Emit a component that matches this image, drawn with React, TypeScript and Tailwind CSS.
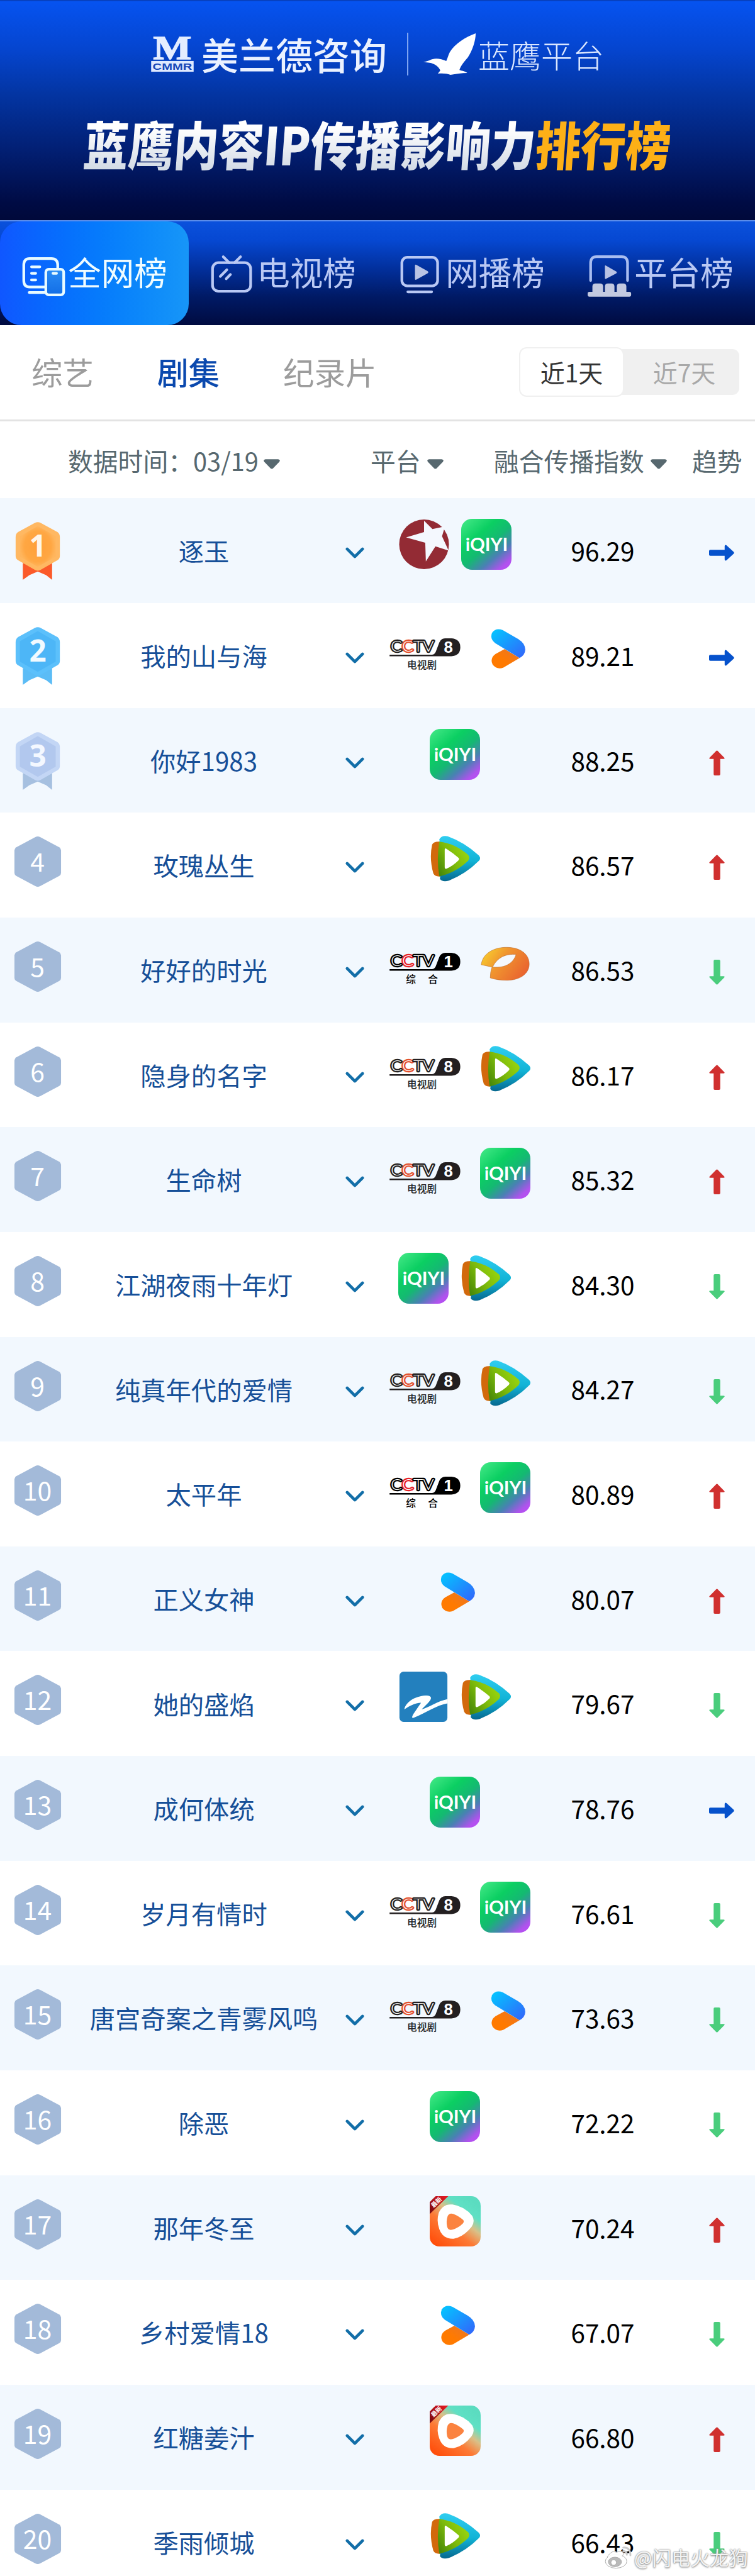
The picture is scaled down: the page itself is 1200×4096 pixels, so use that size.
import React from "react";

const FONT = "font-['Noto_Sans_CJK_SC','Noto_Sans',sans-serif]";

type Platform = "dragon" | "iqiyi" | "cctv8" | "cctv1" | "youku" | "tencent" | "jiangsu" | "zhejiang" | "hongguo";
type Trend = "flat" | "up" | "down";

type Item = {
  title: string;
  platforms: Platform[];
  score: string;
  trend: Trend;
};

const items: Item[] = [
  { title: "逐玉", platforms: ["dragon", "iqiyi"], score: "96.29", trend: "flat" },
  { title: "我的山与海", platforms: ["cctv8", "youku"], score: "89.21", trend: "flat" },
  { title: "你好1983", platforms: ["iqiyi"], score: "88.25", trend: "up" },
  { title: "玫瑰丛生", platforms: ["tencent"], score: "86.57", trend: "up" },
  { title: "好好的时光", platforms: ["cctv1", "jiangsu"], score: "86.53", trend: "down" },
  { title: "隐身的名字", platforms: ["cctv8", "tencent"], score: "86.17", trend: "up" },
  { title: "生命树", platforms: ["cctv8", "iqiyi"], score: "85.32", trend: "up" },
  { title: "江湖夜雨十年灯", platforms: ["iqiyi", "tencent"], score: "84.30", trend: "down" },
  { title: "纯真年代的爱情", platforms: ["cctv8", "tencent"], score: "84.27", trend: "down" },
  { title: "太平年", platforms: ["cctv1", "iqiyi"], score: "80.89", trend: "up" },
  { title: "正义女神", platforms: ["youku"], score: "80.07", trend: "up" },
  { title: "她的盛焰", platforms: ["zhejiang", "tencent"], score: "79.67", trend: "down" },
  { title: "成何体统", platforms: ["iqiyi"], score: "78.76", trend: "flat" },
  { title: "岁月有情时", platforms: ["cctv8", "iqiyi"], score: "76.61", trend: "down" },
  { title: "唐宫奇案之青雾风鸣", platforms: ["cctv8", "youku"], score: "73.63", trend: "down" },
  { title: "除恶", platforms: ["iqiyi"], score: "72.22", trend: "down" },
  { title: "那年冬至", platforms: ["hongguo"], score: "70.24", trend: "up" },
  { title: "乡村爱情18", platforms: ["youku"], score: "67.07", trend: "down" },
  { title: "红糖姜汁", platforms: ["hongguo"], score: "66.80", trend: "up" },
  { title: "季雨倾城", platforms: ["tencent"], score: "66.43", trend: "down" },
];

const Defs = () => (
  <svg className="absolute h-0 w-0" aria-hidden="true">
    <defs>
      <linearGradient id="iqiyi" x1="0.1" y1="0" x2="0.95" y2="1">
        <stop offset="0" stopColor="#3ee683" />
        <stop offset="0.3" stopColor="#0bcf62" />
        <stop offset="0.52" stopColor="#14b972" />
        <stop offset="0.72" stopColor="#4a80b4" />
        <stop offset="0.9" stopColor="#b152ee" />
        <stop offset="1" stopColor="#b94df5" />
      </linearGradient>
      <linearGradient id="youku" x1="0" y1="0" x2="1" y2="1">
        <stop offset="0.1" stopColor="#06bfff" />
        <stop offset="0.9" stopColor="#2f6cfb" />
      </linearGradient>
      <linearGradient id="youkuOrange" x1="0" y1="1" x2="1" y2="0">
        <stop offset="0.4" stopColor="#ff7a00" />
        <stop offset="1" stopColor="#e8762c" />
      </linearGradient>
      <linearGradient id="txBlue" x1="0" y1="0" x2="0" y2="1">
        <stop offset="0" stopColor="#2fcdf0" />
        <stop offset="0.55" stopColor="#11b3d6" />
        <stop offset="1" stopColor="#06688f" />
      </linearGradient>
      <linearGradient id="txGreen" x1="0.9" y1="0.2" x2="0" y2="0.8">
        <stop offset="0" stopColor="#9ad50e" />
        <stop offset="0.5" stopColor="#7dba0b" />
        <stop offset="1" stopColor="#4a8a08" />
      </linearGradient>
      <linearGradient id="jiangsu" x1="0" y1="0.2" x2="1" y2="0.7">
        <stop offset="0" stopColor="#f8cf2e" />
        <stop offset="0.4" stopColor="#f0962f" />
        <stop offset="1" stopColor="#e9612f" />
      </linearGradient>
      <linearGradient id="hongguo" x1="0.15" y1="1" x2="0.85" y2="0.1">
        <stop offset="0" stopColor="#ff4d0a" />
        <stop offset="0.4" stopColor="#fd7a35" />
        <stop offset="0.62" stopColor="#d9c088" />
        <stop offset="0.8" stopColor="#5fe0c4" />
        <stop offset="1" stopColor="#5bdcc0" />
      </linearGradient>
      <linearGradient id="ribbon" x1="0" y1="1" x2="1" y2="0">
        <stop offset="0.1" stopColor="#7d0a10" />
        <stop offset="0.9" stopColor="#e01a22" />
      </linearGradient>
      <radialGradient id="medal1">
        <stop offset="0" stopColor="#ffa03a" />
        <stop offset="0.75" stopColor="#ffa743" />
        <stop offset="1" stopColor="#ffb55c" />
      </radialGradient>
      <linearGradient id="phone" x1="0" y1="0" x2="0" y2="1">
        <stop offset="0" stopColor="#2a8cf5" />
        <stop offset="1" stopColor="#126ee6" />
      </linearGradient>
    </defs>
  </svg>
);

const Dragon = () => (
  <svg className="h-[81px] w-[80px]" viewBox="0 0 84 85">
    <circle cx="42" cy="42.5" r="41.5" fill="#932b34" />
    <path d="M42 3 L56 17 L71 14 L77 12 L72 29 L83 53 L61 46 L45 71 L44 40 L12 31 L42 22 Z" fill="#f4f8fe" />
  </svg>
);

const Iqiyi = () => (
  <svg className="h-[81px] w-[80px]" viewBox="0 0 84 85">
    <rect x="0" y="0" width="84" height="85" rx="18" fill="url(#iqiyi)" />
    <text x="7" y="54" fontSize="30" fontWeight="700" fill="#fff" textLength="71" lengthAdjust="spacingAndGlyphs" fontFamily="Lato, sans-serif">
      iQIYI
    </text>
  </svg>
);

const Cctv = ({ channel, label, dark, red }: { channel: string; label: string; dark: string; red: string }) => (
  <svg className="h-[81px] w-[141px]" viewBox="0 0 148 85">
    {/* inline letters: heavy stroke below, thin light fill on top */}
    <text
      x="19"
      y="46"
      fontFamily="Lato, sans-serif"
      fontWeight="300"
      fontSize="25"
      textLength="72"
      lengthAdjust="spacingAndGlyphs"
      fill="#fff"
      stroke={dark}
      strokeWidth="4.6"
      strokeLinejoin="round"
      paintOrder="stroke"
    >
      C<tspan stroke={red}>C</tspan>TV
    </text>
    <path d="M17 51.5 H88 Q93 51 95 44 L100 31 Q103 24 110 24 H120 Q135 25 135 39 Q135 53 120 54 H17 Z" fill={dark} />
    <text x="115" y="48" fontSize="27" fontWeight="700" fill="#fff" textAnchor="middle" fontFamily="Liberation Sans, sans-serif">
      {channel}
    </text>
    <text x="71" y="74" fontSize="16.5" fontWeight="500" fill={dark} textAnchor="middle" className="whitespace-pre" fontFamily="Noto Sans CJK SC, sans-serif">
      {label}
    </text>
  </svg>
);

const Youku = () => (
  <svg className="h-[81px] w-[81px]" viewBox="0 0 85 85">
    <path d="M41 42 L66 57 L39 73 Q28 77 21 68 Q16 57 26 50 Z" fill="url(#youkuOrange)" />
    <path d="M25 32 Q16 25 20 15 Q26 6 38 10.500 L63 25 Q75 32 75.500 43 Q75 52 66 57 Z" fill="url(#youku)" />
  </svg>
);

const Tencent = () => (
  <svg className="h-[81px] w-[81px]" viewBox="0 0 85 85">
    <path d="M15 14 Q20 13 24 14 L34 20 V66 L18 72 Q9 73 6 67 Q-1 42 4 19 Q6 14 15 14 Z" fill="#d2690c" />
    <path d="M16 10 Q20 3 30 5 Q58 15 82 37 Q86 42 82 46 Q60 68 32 79 Q21 82 17 76 Q22 42 16 10 Z" fill="url(#txBlue)" />
    <path d="M16 14 Q42 17 64 36 Q68 41 64 46 Q43 66 16 72 Q11 44 16 14 Z" fill="url(#txGreen)" />
    <path d="M25 27 Q25 24 28 26 Q39 33 48 41 Q50 43 48 45 Q39 54 28 59 Q25 60 25 57 Z" fill="#fff" />
  </svg>
);

const Jiangsu = () => (
  <svg className="h-[81px] w-[81px]" viewBox="0 0 85 85">
    <path
      d="M2 44 C4 26 22 15 44 15 C67 15 82 26 82 43 C82 60 65 70 45 70 C35 70 26 69 17 66 Q17 56 20 48 Z"
      fill="url(#jiangsu)"
      stroke="#b8682c"
      strokeWidth="0.6"
    />
    <path d="M21 48 C28 32 44 25 60 27 C56 40 44 50 21 48 Z" fill="#f4f8fe" stroke="#b8682c" strokeWidth="0.6" />
  </svg>
);

const Zhejiang = () => (
  <svg className="h-[81px] w-[80px]" viewBox="0 0 84 85">
    <rect x="2" y="0" width="80" height="84" rx="7" fill="#2380be" />
    <path d="M10 63 C14 48 32 40 48 40 C58 41 55 47 50 52 L39 63 C52 60 66 49 82 46 L82 53 C64 56 48 68 26 77 C22 78 23 75 25 71 L38 52 C28 52 18 58 10 63 Z" fill="#fff" />
  </svg>
);

const Hongguo = () => (
  <svg className="h-[81px] w-[81px]" viewBox="0 0 85 85">
    <rect x="0" y="0" width="85" height="84" rx="16" fill="url(#hongguo)" />
    <path d="M0 30 V10 L10 0 H31 Z" fill="url(#ribbon)" />
    <text x="11" y="14" fontSize="10" fontWeight="700" fill="#fff" textAnchor="middle" transform="rotate(-43 11 10)" fontFamily="Noto Sans CJK SC, sans-serif">
      最新
    </text>
    <path d="M15 28 Q22 12 38 14 Q58 17 71 33 Q76 42 70 51 Q57 68 40 71 Q22 72 16 55 Q11 42 15 28 Z" fill="#fff" />
    <path d="M30 33 Q33 27 40 30 Q48 33 56 40 Q58 43 55 46 Q48 53 38 56 Q31 58 29 51 Q27 42 30 33 Z" fill="#fb8340" />
  </svg>
);

const logos: Record<Platform, React.ReactNode> = {
  dragon: <Dragon />,
  iqiyi: <Iqiyi />,
  cctv8: <Cctv channel="8" label="电视剧" dark="#231f20" red="#e2502f" />,
  cctv1: <Cctv channel="1" label="综 　合" dark="#000000" red="#e62129" />,
  youku: <Youku />,
  tencent: <Tencent />,
  jiangsu: <Jiangsu />,
  zhejiang: <Zhejiang />,
  hongguo: <Hongguo />,
};

const medals = [
  { outer: "#ffb862", inner: "url(#medal1)", ribbon: "#fb5a2a", digit: "#fff6ea" },
  { outer: "#5cc0fb", inner: "#4db6f7", ribbon: "#5bbcf6", digit: "#f2faff" },
  { outer: "#c3d6f5", inner: "#b2c8ee", ribbon: "#a6c0e0", digit: "#f4f8ff" },
];

const Medal = ({ rank }: { rank: number }) => {
  const m = medals[rank - 1];
  return (
    <svg className="h-[95px] w-[76px]" viewBox="0 0 80 100">
      <path d="M15 70 H64 V98 L54 90 L40 84 L26 90 L15 98 Z" fill={m.ribbon} />
      <path d="M35 2.5 Q40 0 45 2.5 L73 18 Q77 21 77 26 V58 Q77 63 73 65 L45 81 Q40 84 35 81 L7 65 Q3 63 3 58 V26 Q3 21 7 18 Z" fill={m.outer} />
      <path d="M40 8 L70 25 V59 L40 76 L10 59 V25 Z" fill={m.inner} />
      <text x="40" y="59" fontSize="50" fontWeight="700" fill={m.digit} textAnchor="middle" fontFamily="Noto Sans, sans-serif">
        {rank}
      </text>
    </svg>
  );
};

const RankBadge = ({ rank }: { rank: number }) => (
  <svg className="h-[82px] w-[76px]" viewBox="0 0 80 86">
    <path d="M36 2 Q40 0 44 2 L76 19 Q79 21 79 24 V62 Q79 65 76 67 L44 84 Q40 86 36 84 L4 67 Q1 65 1 62 V24 Q1 21 4 19 Z" fill="#a3bad9" />
    <text x="39.5" y="60" fontSize="43" fill="#fff" textAnchor="middle" fontFamily="Noto Sans CJK SC, sans-serif">
      {rank}
    </text>
  </svg>
);

const TrendIcon = ({ trend }: { trend: Trend }) => {
  if (trend === "flat") {
    return (
      <svg className="h-[40px] w-[40px]" viewBox="0 0 42 42">
        <path d="M2 16 H26 V10 Q26 7 29 8.5 L41 19.5 Q42.5 21 41 22.5 L29 33.5 Q26 35 26 32 V26 H2 Q0 26 0 24 V18 Q0 16 2 16 Z" fill="#0652cc" />
      </svg>
    );
  }
  return (
    <svg className={trend === "up" ? "h-[40px] w-[25px]" : "h-[40px] w-[25px] rotate-180"} viewBox="0 0 26 42">
      <path
        d="M12 0.8 Q13 0 14 0.8 L25.5 12.5 Q26.5 14.5 24 14.5 H18.5 V40 Q18.5 42 16.5 42 H9.5 Q7.5 42 7.5 40 V14.5 H2 Q-0.5 14.5 0.5 12.5 Z"
        fill={trend === "up" ? "#d0302f" : "#4acd7c"}
      />
    </svg>
  );
};

const Caret = () => (
  <svg className="mt-[11px] h-[16px] w-[26px]" viewBox="0 0 27 16">
    <path d="M3 0 H24 Q28 0.5 26 4 L16 14.5 Q13.5 17 11 14.5 L1 4 Q-1 0.5 3 0 Z" fill="#57686f" />
  </svg>
);

const Row = ({ item, rank }: { item: Item; rank: number }) => (
  <div className={rank % 2 ? "flex h-[166.65px] shrink-0 bg-[#f2f8fe]" : "flex h-[166.65px] shrink-0 bg-white"}>
    <div className="flex w-[120px] justify-center pt-[37px]">
      {rank <= 3 ? <Medal rank={rank} /> : <RankBadge rank={rank} />}
    </div>
    <div className="flex w-[408px] items-center justify-center whitespace-nowrap text-[40.3px] text-[#164f98]">
      {item.title}
    </div>
    <div className="flex w-[72px] justify-center pt-[77px]">
      <svg className="h-[20px] w-[32px]" viewBox="0 0 34 21" fill="none" stroke="#126ea8" strokeWidth="5" strokeLinecap="round" strokeLinejoin="round">
        <path d="M4 4 L17 17 L30 4" />
      </svg>
    </div>
    <div className="flex w-[246px] justify-center gap-[19px] pt-[33px]">
      {item.platforms.map((p) => (
        <div key={p} className="shrink-0">{logos[p]}</div>
      ))}
    </div>
    <div className="flex w-[224px] items-center justify-center text-[40.5px] text-black">{item.score}</div>
    <div className="flex-1 pl-[57px] pt-[67px]">
      <TrendIcon trend={item.trend} />
    </div>
  </div>
);

const IconAll = () => (
  <svg className="h-[67px] w-[71px]" viewBox="0 0 75 70" fill="none" stroke="#e9fbff" strokeWidth="4.5" strokeLinecap="round">
    <path d="M61 22 V17 Q61 6 50 6 H14 Q4 6 4 17 V43 Q4 54 14 54 H40" />
    <path d="M17 20 H31 M17 31 H24 M17 42 H24 M13 63 H40" />
    <rect x="41" y="24" width="30" height="43" rx="5" fill="url(#phone)" />
    <path d="M53 31 H59" />
  </svg>
);

const IconTv = () => (
  <svg className="h-[67px] w-[71px]" viewBox="0 0 75 70" fill="none" stroke="#b9c8f4" strokeWidth="4.5" strokeLinecap="round">
    <rect x="4" y="13" width="64" height="48" rx="10" />
    <path d="M22 3 L32 13 M51 3 L41 13 M17 36 L28 25 M27 40 L34 33" />
  </svg>
);

const IconWeb = () => (
  <svg className="h-[67px] w-[71px]" viewBox="0 0 75 70" fill="none" stroke="#b9c8f4" strokeWidth="4.5" strokeLinecap="round">
    <rect x="5" y="4" width="60" height="48" rx="9" />
    <path d="M15 62 H55" />
    <path d="M27 18 Q27 15 30 17 L48 27 Q51 29 48 31 L30 41 Q27 43 27 40 Z" fill="#b9c3e4" stroke="none" />
  </svg>
);

const IconPlatform = () => (
  <svg className="h-[67px] w-[71px]" viewBox="0 0 75 70" fill="none" stroke="#a9bdf0" strokeWidth="4.5" strokeLinecap="round">
    <path d="M5 43 V14 Q5 3 15 3 H57 Q67 3 67 14 V43" />
    <path d="M29 19 Q29 17 31 18 L48 28 Q50 29 48 31 L31 40 Q29 41 29 39 Z" fill="#b9c3e4" stroke="none" />
    <path d="M8 53 Q8 48 13 48 H21 Q26 48 26 53 V64 H8 Z M29 53 Q29 48 34 48 H40 Q45 48 45 53 V64 H29 Z M49 53 Q49 48 54 48 H60 Q65 48 65 53 V64 H49 Z" fill="#c3cae0" stroke="none" />
    <rect x="0" y="62" width="73" height="8" rx="3" fill="#c3cae0" stroke="none" />
  </svg>
);

const tabs = [
  { label: "全网榜", icon: <IconAll />, active: true },
  { label: "电视榜", icon: <IconTv /> },
  { label: "网播榜", icon: <IconWeb /> },
  { label: "平台榜", icon: <IconPlatform /> },
];

const Header = () => (
  <header className="flex h-[350px] shrink-0 flex-col items-center border-t-2 border-[#0741c0] bg-[linear-gradient(180deg,#0653f0_0%,#0545cf_22%,#0335a3_42%,#021f73_68%,#000b44_92%,#00093a_100%)]">
    <div className="mt-[44px] flex h-[80px] w-[720px] items-center">
      <svg className="h-[58px] w-[68px] shrink-0 overflow-visible" viewBox="0 0 71 61">
        <text x="35.5" y="38.5" fontSize="56" fontWeight="700" fill="#e4edff" stroke="#e4edff" strokeWidth="1.5" textAnchor="middle" textLength="64" lengthAdjust="spacingAndGlyphs" fontFamily="Liberation Serif, serif">
          M
        </text>
        <rect x="0" y="42" width="71" height="18" fill="#dfe9ff" />
        <text x="35.5" y="56.5" fontSize="16" fontWeight="700" fill="#1747b8" textAnchor="middle" textLength="66" lengthAdjust="spacingAndGlyphs" fontFamily="Liberation Sans, sans-serif">
          CMMR
        </text>
      </svg>
      <div className="ml-[12px] w-[298px] whitespace-nowrap text-[59px] leading-[80px] font-medium text-[#eaf1ff]">美兰德咨询</div>
      <div className="ml-[29px] h-[68px] w-[2px] shrink-0 bg-[#7ea4f2]" />
      <svg className="ml-[24px] h-[66px] w-[84px] shrink-0" viewBox="0 0 88 69">
        <path d="M87 0 C70 6 52 18 44 31 C41 37 40 42 38 46 C29 42 18 40 10 45 L0 48 C8 48 13 49 17 51 C23 54 27 58 28 62 L24 67 C33 66 39 67 45 69 C54 68 64 66 73 66 C69 63 66 63 60 61 C62 54 68 47 74 40 C82 28 87 12 87 0 Z" fill="#fff" />
      </svg>
      <div className="ml-[3px] whitespace-nowrap text-[50px] leading-[80px] font-light text-[#dbe7ff]">蓝鹰平台</div>
    </div>
    <h1 className="mt-[46px] whitespace-nowrap text-[83px] leading-[110px] font-black [transform:scaleX(0.863)_skewX(-5deg)]">
      <span className="bg-gradient-to-b from-white from-30% to-[#d3dbe6] to-85% bg-clip-text text-transparent">蓝鹰内容IP传播影响力</span>
      <span className="text-[#fdb017]">排行榜</span>
    </h1>
  </header>
);

const App = () => (
  <div className={`relative flex h-[4096px] w-[1200px] flex-col overflow-hidden bg-white ${FONT}`}>
    <Defs />
    <Header />
    <nav className="flex h-[167px] shrink-0 border-t-2 border-[#5b8dea] bg-[linear-gradient(180deg,#0a51dc_0%,#0648d2_18%,#02309d_45%,#001a66_72%,#000b40_100%)]">
      {tabs.map((t) => (
        <div
          key={t.label}
          className={
            t.active
              ? "flex w-[300px] items-center justify-center gap-[3px] rounded-[34px] bg-gradient-to-r from-[#1057ff] to-[#1796f8] text-[#f0fcff]"
              : "flex w-[300px] items-center justify-center gap-[3px] text-[#b9c8f4]"
          }
        >
          <div className="mt-[8px]">{t.icon}</div>
          <span className="-mt-[8px] whitespace-nowrap text-[52.5px] leading-[76px]">{t.label}</span>
        </div>
      ))}
    </nav>
    <div className="flex h-[153px] shrink-0 items-start border-b-[3px] border-[#e3e3e3] pl-[50px]">
      <div className="flex gap-[101px] pt-[38px] text-[49.5px] leading-[72px] text-[#9c9c9c]">
        <span>综艺</span>
        <span className="font-medium text-[#0b49ae]">剧集</span>
        <span>纪录片</span>
      </div>
      <div className="mr-[25px] ml-auto mt-[38px] flex h-[73px] items-center rounded-[11px] bg-[#f0f0f0] text-[39px]">
        <div className="flex h-[79px] w-[167px] items-center justify-center rounded-[12px] border-2 border-[#f0f0f0] bg-white text-[#333333]">近1天</div>
        <div className="flex w-[183px] items-center justify-center pl-[8px] text-[#a8a8a8]">近7天</div>
      </div>
    </div>
    <div className="flex h-[122.4px] shrink-0 items-start whitespace-nowrap pt-[33px] text-[39.8px] leading-[58px] text-[#57686f]">
      <div className="flex w-[589px] items-center gap-[8px] pl-[108px]">
        <span>数据时间：03/19</span>
        <Caret />
      </div>
      <div className="flex w-[196px] items-center gap-[10px]">
        <span>平台</span>
        <Caret />
      </div>
      <div className="flex w-[315px] items-center gap-[10px]">
        <span>融合传播指数</span>
        <Caret />
      </div>
      <span>趋势</span>
    </div>
    {items.map((item, i) => (
      <Row key={item.title} item={item} rank={i + 1} />
    ))}
    {/* watermark */}
    <div className="absolute right-[11px] bottom-[8px] flex items-center gap-[2px]">
      <svg className="h-[38px] w-[46px]" viewBox="0 0 48 40">
        <g stroke="#a8a8a8" strokeWidth="1">
          <ellipse cx="20" cy="27" rx="18" ry="11.5" fill="#fff" fillOpacity="0.9" />
          <path d="M5 20 C10 11 19 8 21 12 C26 9 33 10 32 15 L31 18" fill="#fff" fillOpacity="0.9" />
          <ellipse cx="18" cy="28" rx="11" ry="8" fill="#b9b9b9" />
          <circle cx="16" cy="29" r="4.5" fill="#fff" />
        </g>
        <path d="M32 4 Q44 3 44 17 M32 10 Q38 10 38 16" fill="none" stroke="#c9c9c9" strokeWidth="3" strokeLinecap="round" />
      </svg>
      <span className="text-[30.5px] leading-[44px] text-white/90 [text-shadow:0_0_2px_#777,0_1px_3px_#888]">@闪电火龙狗</span>
    </div>
  </div>
);

export default App;
